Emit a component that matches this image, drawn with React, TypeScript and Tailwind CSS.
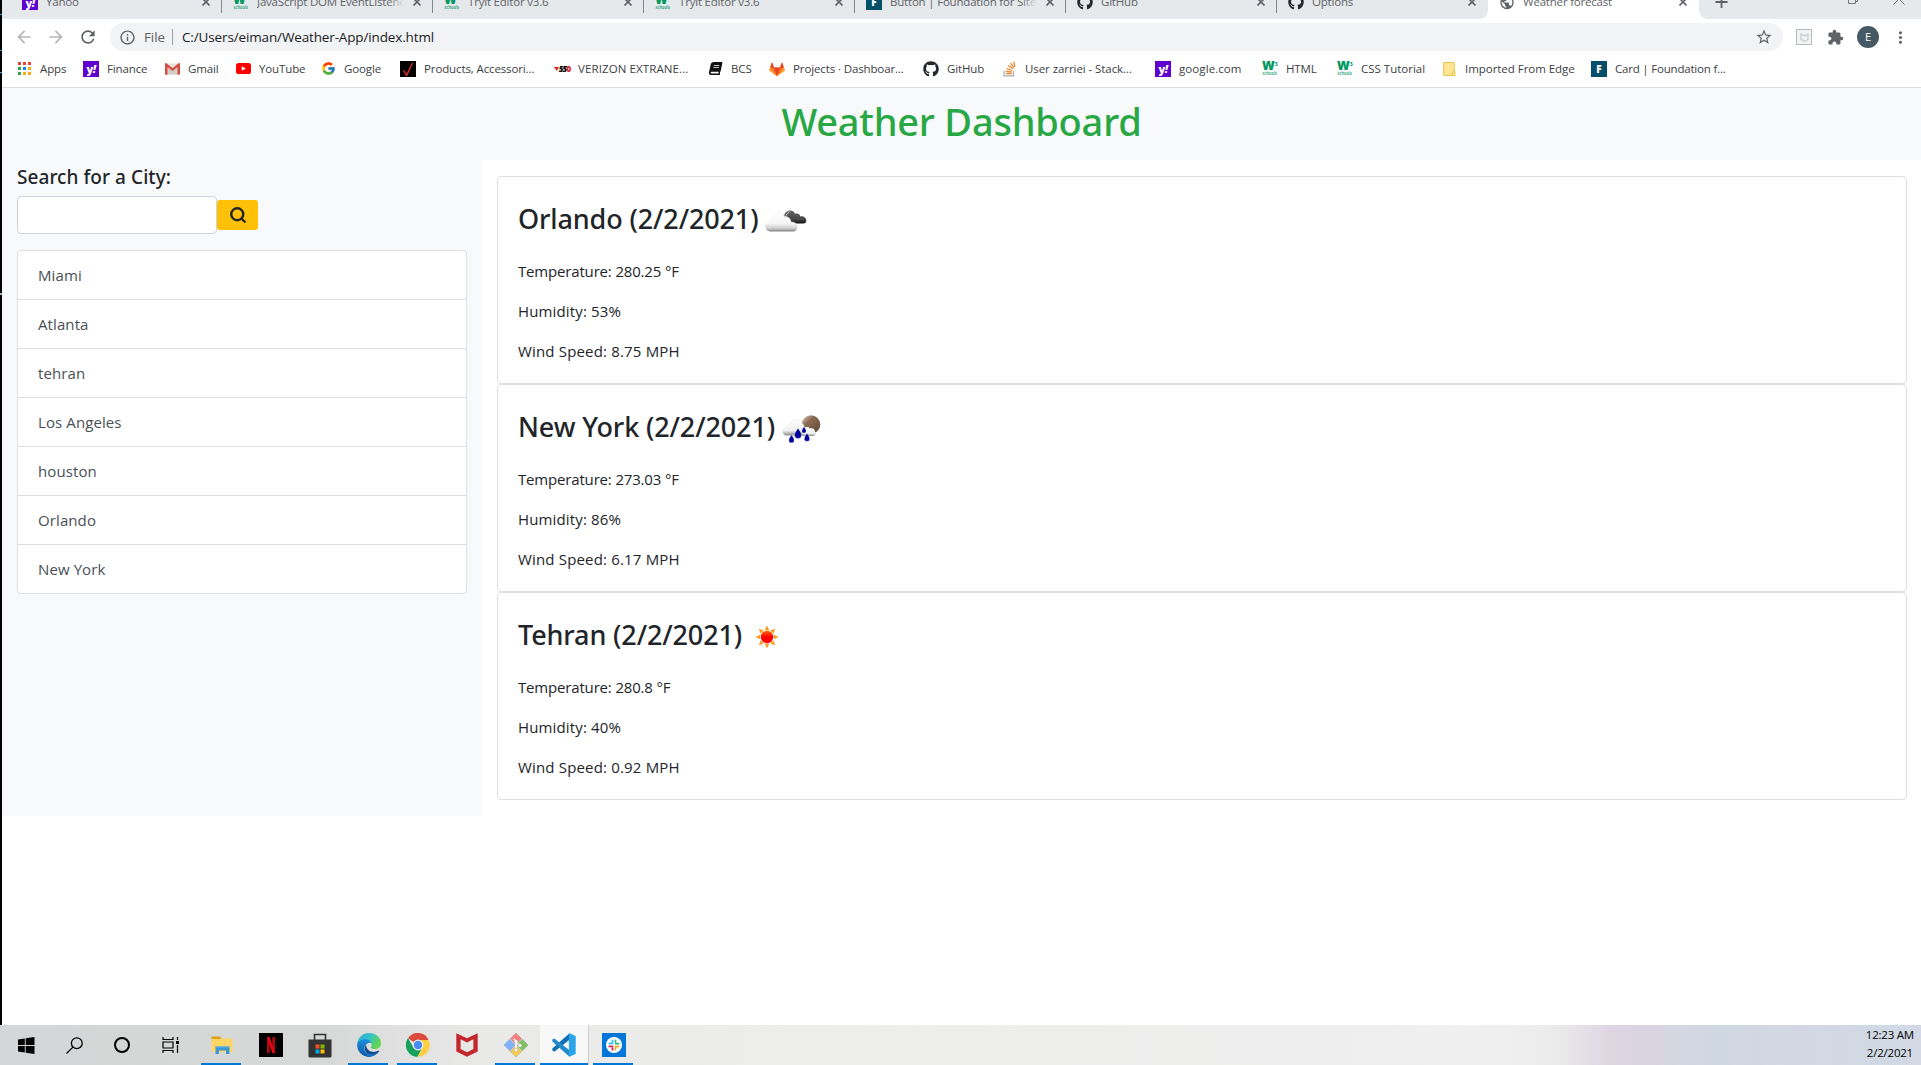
import type { ReactNode } from "react";
import { MdArrowBack, MdArrowForward, MdExtension, MdInfoOutline, MdMoreVert, MdPublic, MdRefresh, MdStarBorder } from "react-icons/md";
import { FaBook, FaGithub } from "react-icons/fa";
import { FcGoogle } from "react-icons/fc";
import { Search } from "lucide-react";

/* ---------- favicons ---------- */

const Yahoo = () => (
  <div className="flex h-4 w-4 items-center justify-center bg-[#5f01d1]">
    <span className="font-['Open_Sans',sans-serif] text-[11px] leading-none font-extrabold tracking-[-0.5px] text-white">
      y<i>!</i>
    </span>
  </div>
);

const Foundation = () => (
  <div className="flex h-4 w-4 items-center justify-center bg-[#074e68] font-['Open_Sans',sans-serif] text-[10px] leading-none font-extrabold text-white">
    F
  </div>
);

const W3 = () => (
  <svg width="17" height="17" viewBox="0 0 17 17" fill="#059862">
    <text x="0" y="10.5" fontFamily="Open Sans, sans-serif" fontSize="17" fontWeight="800" textLength="13.5" lengthAdjust="spacingAndGlyphs">w</text>
    <text x="13.2" y="5.5" fontFamily="Open Sans, sans-serif" fontSize="6" fontWeight="700">3</text>
    <text x="0.5" y="15.6" fontFamily="Open Sans, sans-serif" fontSize="5" fontWeight="700" textLength="15.5" lengthAdjust="spacingAndGlyphs" opacity="0.75">schools</text>
  </svg>
);

const AppsGrid = () => (
  <div className="grid grid-cols-3 gap-[2px]">
    {["bg-[#ea4335]", "bg-[#ea4335]", "bg-[#ea4335]", "bg-[#34a05a]", "bg-[#1a84f0]", "bg-[#f9ab10]", "bg-[#34a05a]", "bg-[#f9ab10]", "bg-[#f9ab10]"].map((c, i) => (
      <span key={i} className={`h-[3px] w-[3px] ${c}`} />
    ))}
  </div>
);

const Gmail = () => (
  <svg width="15" height="12" viewBox="0 0 15 12">
    <path d="M1 .5h13v11H1z" fill="#e6e2e0" />
    <path d="M2.5 11.5V4l5 3.8 5-3.8v7.5z" fill="#d3cdca" />
    <path d="M0 1.2C0 .5.6 0 1.2 0L7.5 5.2 13.8 0c.7 0 1.2.5 1.2 1.2V11c0 .5-.4.8-.8.8h-1.7V4L7.5 8 2.5 4v7.8H.8C.4 11.8 0 11.500 0 11z" fill="#d54b3d" />
  </svg>
);

const YouTube = () => (
  <svg width="15" height="11" viewBox="0 0 15 11">
    <rect width="15" height="11" rx="2.600" fill="#f00" />
    <path d="M5.800 3.200v4.600L9.800 5.500z" fill="#fff" />
  </svg>
);

const Verizon = () => (
  <svg width="16" height="16" viewBox="0 0 16 16">
    <rect width="16" height="16" fill="#000" />
    <path d="M3 9.200h1.600l1.900 3.600L12 1.800h1.300L7.200 15H6z" fill="#e02a2a" />
  </svg>
);

const VerizonSso = () => (
  <div className="flex items-center font-['Open_Sans',sans-serif] text-[8px] leading-none font-extrabold tracking-[-0.8px]">
    <svg width="5" height="4" viewBox="0 0 5 4"><path d="M0 0h5L2.800 4z" fill="#e02020" /></svg>
    <i>55</i>
    <span className="text-[#e02020]">0</span>
  </div>
);

const Gitlab = ({ size = 16 }: { size?: number }) => (
  <svg width={size} height={size} viewBox="0 0 16 16">
    <path d="M8 15.200 2 10.700.2 9.300 3 1.200 5 6.500h6l2-5.300 2.800 8.100-1.800 1.400z" fill="#fc6d26" />
    <path d="M8 15.200 5 6.500h6z" fill="#e24329" />
    <path d="M3 1.200 5 6.500H1.200zM13 1.200 11 6.500h3.800z" fill="#e24329" />
    <path d="M.2 9.300 1.200 6.500 8 15.200zM15.800 9.300l-1-2.800L8 15.200z" fill="#fca326" />
  </svg>
);

const StackOverflow = () => (
  <svg width="13" height="16" viewBox="0 0 13 16" fill="none" strokeWidth="1.200">
    <path d="M1 9.800v5h9.500v-5" stroke="#a9adb1" />
    <path d="M2.800 12.600h6M2.900 10.400l6 .7M3.600 7.600l5.600 1.900M5.200 4.600l4.900 3.200M7.500 2.200l3.600 4.600M10.700.6l1.100 5.200" stroke="#f48024" />
  </svg>
);

const Folder = () => (
  <svg width="13" height="16" viewBox="0 0 13 16">
    <path d="M.7 1.500h10.600v13H.7z" fill="#ffe694" stroke="#ebc54f" />
    <path d="M9.400 14.500V11l2.600-.5v4z" fill="#ffe694" stroke="#ebc54f" />
  </svg>
);

/* ---------- browser chrome ---------- */

const X = () => (
  <svg width="8" height="8" viewBox="0 0 8 8" stroke="#5f6368" strokeWidth="1.600">
    <path d="M.5.500 7.500 7.500M7.500.500.500 7.500" />
  </svg>
);

const tabs: { icon: ReactNode; title: string; active?: boolean; sep?: boolean; fade?: boolean }[] = [
  { icon: <Yahoo />, title: "Yahoo", sep: true },
  { icon: <W3 />, title: "JavaScript DOM EventListener", sep: true, fade: true },
  { icon: <W3 />, title: "Tryit Editor v3.6", sep: true },
  { icon: <W3 />, title: "Tryit Editor v3.6", sep: true },
  { icon: <Foundation />, title: "Button | Foundation for Sites", sep: true, fade: true },
  { icon: <FaGithub size={16} color="#24292e" />, title: "GitHub", sep: true },
  { icon: <FaGithub size={16} color="#24292e" />, title: "Options" },
  { icon: <MdPublic size={17} color="#5f6368" />, title: "Weather forecast", active: true },
];

const TabStrip = () => (
  <div className="flex h-[19px] overflow-hidden bg-[#e6e9ec] pl-[9px]">
    {tabs.map((t, i) => (
      <div key={i} className={`relative h-[19px] w-[211px] shrink-0 ${t.active ? "bg-white" : ""}`}>
        <div className="-mt-[13px] flex h-[30px] items-center pl-[11px]">
          <span className="flex w-4 shrink-0 justify-center">{t.icon}</span>
          <span className="relative ml-[8px] w-[147px] overflow-hidden text-[11.5px] tracking-[-0.2px] whitespace-nowrap text-[#5f6368]">
            {t.title}
            {t.fade && <span className="absolute top-0 right-0 h-full w-4 bg-linear-to-r from-transparent to-[#e6e9ec]" />}
          </span>
          <span className="ml-[9px]"><X /></span>
        </div>
        {t.sep && <span className="absolute top-0 right-0 h-[13px] w-px bg-[#80868b]" />}
        {t.active && (
          <>
            <span className="absolute bottom-0 -left-2 h-2 w-2 bg-[radial-gradient(circle_at_0_0,#e6e9ec_7.500px,#fff_8px)]" />
            <span className="absolute -right-2 bottom-0 h-2 w-2 bg-[radial-gradient(circle_at_100%_0,#e6e9ec_7.500px,#fff_8px)]" />
          </>
        )}
      </div>
    ))}
    <svg className="ml-[16px] shrink-0" width="13" height="9" viewBox="0 0 13 9" stroke="#5f6368" strokeWidth="1.800">
      <path d="M.5 2h12M6.500 0v8" />
    </svg>
    <svg className="ml-auto shrink-0" width="10" height="5" viewBox="0 0 10 5" fill="none" stroke="#74787c">
      <path d="M.5 0v3.500h7V0M7.500 1.500h2V0" />
    </svg>
    <svg className="mr-[16px] ml-[35px] shrink-0" width="12" height="5" viewBox="0 0 12 5" stroke="#74787c">
      <path d="M.5 4.500 6 -1 11.500 4.500" fill="none" />
    </svg>
  </div>
);

const Toolbar = () => (
  <div className="flex h-[36px] items-center bg-white text-[#5f6368]">
    <MdArrowBack size={20} className="ml-[12px] text-[#b4b6b9]" />
    <MdArrowForward size={20} className="ml-[12px] text-[#b4b6b9]" />
    <MdRefresh size={20} className="ml-[12px]" />
    <div className="ml-[12px] flex h-7 w-[1673px] shrink-0 items-center rounded-full bg-[#f1f3f4] text-[13.5px]">
      <MdInfoOutline size={17} className="ml-[9px]" />
      <span className="ml-[8px] w-[21px] tracking-[-0.1px]">File</span>
      <span className="ml-[7px] h-4 w-px bg-[#9aa0a6]" />
      <span className="ml-[9px] tracking-[-0.14px] text-[#202124]">C:/Users/eiman/Weather-App/index.html</span>
      <MdStarBorder size={18} className="mr-[10px] ml-auto" />
    </div>
    <span className="ml-[13px] flex h-4 w-4 items-center justify-center border border-[#b4babd] bg-[#f1f4f4]">
      <svg width="9" height="9" viewBox="0 0 9 9" fill="none" stroke="#d0d3d5" strokeWidth="1.500"><path d="M1 1v5.500l3.500 1.800L8 6.500V1L4.500 3z" /></svg>
    </span>
    <MdExtension size={17} className="ml-[15px]" />
    <span className="ml-[13px] flex h-[22px] w-[22px] items-center justify-center rounded-full bg-[#455a64] text-[11px] text-white">E</span>
    <MdMoreVert size={19} className="ml-[12px]" />
  </div>
);

const bookmarks: { icon: ReactNode; label: string; w: string; track?: string }[] = [
  { icon: <AppsGrid />, label: "Apps", w: "w-[67px]" },
  { icon: <Yahoo />, label: "Finance", w: "w-[81px]" },
  { icon: <Gmail />, label: "Gmail", w: "w-[71px]" },
  { icon: <YouTube />, label: "YouTube", w: "w-[85px]" },
  { icon: <FcGoogle size={15} />, label: "Google", w: "w-[80px]" },
  { icon: <Verizon />, label: "Products, Accessori...", w: "w-[154px]" },
  { icon: <VerizonSso />, label: "VERIZON EXTRANE...", w: "w-[153px]", track: "tracking-[0.1px]" },
  { icon: <FaBook size={13} color="#111" className="-skew-x-12" />, label: "BCS", w: "w-[62px]" },
  { icon: <Gitlab />, label: "Projects · Dashboar...", w: "w-[154px]" },
  { icon: <FaGithub size={16} color="#24292e" />, label: "GitHub", w: "w-[78px]" },
  { icon: <StackOverflow />, label: "User zarriei - Stack...", w: "w-[154px]", track: "tracking-[-0.07px]" },
  { icon: <Yahoo />, label: "google.com", w: "w-[107px]", track: "tracking-[0.08px]" },
  { icon: <W3 />, label: "HTML", w: "w-[75px]" },
  { icon: <W3 />, label: "CSS Tutorial", w: "w-[104px]", track: "tracking-[0px]" },
  { icon: <Folder />, label: "Imported From Edge", w: "w-[150px]", track: "tracking-[-0.04px]" },
  { icon: <Foundation />, label: "Card | Foundation f...", w: "w-[154px]", track: "tracking-[-0.2px]" },
];

const BookmarkBar = () => (
  <div className="flex h-[33px] items-center border-b border-[#d9dce0] bg-white pb-[5px] pl-[14px]">
    {bookmarks.map((b) => (
      <div key={b.label} className={`flex shrink-0 items-center gap-2 ${b.w}`}>
        <span className="flex w-4 shrink-0 items-center justify-center">{b.icon}</span>
        <span className={`text-[11.5px] whitespace-nowrap text-[#3c4043] ${b.track ?? "tracking-[-0.12px]"}`}>{b.label}</span>
      </div>
    ))}
  </div>
);

/* ---------- weather icons ---------- */

const BrokenClouds = () => (
  <svg width="42" height="24" viewBox="0 0 42 24">
    <defs>
      <linearGradient id="cl" x1="0" y1="0" x2="0" y2="1">
        <stop offset="0" stopColor="#fff" />
        <stop offset=".55" stopColor="#f6f6f6" />
        <stop offset=".82" stopColor="#cfcfcf" />
        <stop offset=".93" stopColor="#a5a5a5" />
        <stop offset="1" stopColor="#555" />
      </linearGradient>
      <linearGradient id="dk" x1="0" y1="0" x2="0" y2="1">
        <stop offset="0" stopColor="#666" />
        <stop offset=".7" stopColor="#444" />
        <stop offset="1" stopColor="#111" />
      </linearGradient>
    </defs>
    <path d="M19 8c0-4 2.500-6.500 6-6.500 3 0 4.600 1.800 5.200 3.300 2.500-1 4.600.4 5.100 2.600 3-.6 6 1.200 6 4 0 2.400-1.800 3.200-4 3.200H27z" fill="url(#dk)" />
    <path d="M18.500 8c.8-4.400 3.200-6.500 6-6M20.500 8.500c.5-3 2-4.800 3.800-5.200" fill="none" stroke="#c8c8c8" strokeWidth="1" />
    <path d="M5.500 22.500C2.500 22.500.5 20.500.5 17.800c0-2.700 2-4.500 4.300-4.700C5 10 6.500 9.200 8 9c.8-2.800 3.200-4.700 6-4.700 2.600 0 4.400 1.300 5.400 3.300 3.600-.4 6.400 2 6.600 5.400 3.600-.3 6.500 1.900 6.500 5 0 2.700-2 4.500-4.500 4.500z" fill="url(#cl)" stroke="#e6e6e6" strokeWidth=".4" />
  </svg>
);

const Drop = ({ x, y, s }: { x: number; y: number; s: number }) => (
  <path transform={`translate(${x} ${y}) scale(${s})`} d="M0-4.500C.8-2.800 2.800-.8 2.800 1.200a2.800 2.800 0 0 1-5.600 0C-2.800-.8-.8-2.800 0-4.500z" fill="#00009c" stroke="#fff" strokeWidth=".3" />
);

const RainMoon = () => (
  <svg width="39" height="29" viewBox="0 0 39 29">
    <defs>
      <linearGradient id="mn" x1="0" y1="0" x2="1" y2="1">
        <stop offset="0" stopColor="#e8d5c6" />
        <stop offset=".35" stopColor="#8d6b55" />
        <stop offset="1" stopColor="#5b4538" />
      </linearGradient>
      <linearGradient id="cr" x1="0" y1="0" x2="0" y2="1">
        <stop offset="0" stopColor="#fff" />
        <stop offset=".7" stopColor="#f0f0f0" />
        <stop offset="1" stopColor="#8a8a8a" />
      </linearGradient>
    </defs>
    <circle cx="29" cy="9.500" r="9.300" fill="url(#mn)" />
    <path d="M16 21c-1-3 1-6 5-6.500.8-2.500 4.600-3.500 6.800-1 2.800-.6 5 .8 5 3 1.400.8 1 4.500-2 4.500z" fill="url(#cr)" />
    <path d="M4.500 20.500C2 20.500.5 18.800.5 16.500s1.600-4 3.700-4.200c.2-2 1.600-3.300 3.400-3.300C8.500 6 10.700 4 13.500 4c3 0 5 1.700 6 4 2 1 3 3 3 5.500 0 4-2 7-5.500 7z" fill="url(#cr)" stroke="#ddd" strokeWidth=".3" />
    <Drop x={9.500} y={24} s={0.950} />
    <Drop x={16} y={18.500} s={1.250} />
    <Drop x={25} y={22.500} s={0.950} />
    <Drop x={22} y={15} s={0.750} />
  </svg>
);

const Sun = () => (
  <svg width="24" height="24" viewBox="-12 -12 24 24">
    <defs>
      <linearGradient id="sn" x1="0" y1="0" x2="0" y2="1">
        <stop offset="0" stopColor="#ff6a00" />
        <stop offset=".5" stopColor="#ff0000" />
      </linearGradient>
    </defs>
    {[0, 45, 90, 135, 180, 225, 270, 315].map((a) => (
      <path key={a} transform={`rotate(${a})`} d="M-2.300-6.800 0-11.500 2.300-6.800z" fill="#ff9a1a" />
    ))}
    <circle r="6.200" fill="url(#sn)" />
  </svg>
);

/* ---------- dashboard ---------- */

const cities = ["Miami", "Atlanta", "tehran", "Los Angeles", "houston", "Orlando", "New York"];

const reports = [
  { city: "Orlando (2/2/2021)", icon: <BrokenClouds />, w: "w-[247px]", iconPad: "pt-[2px]", t: "280.25", h: 53, wind: "8.75" },
  { city: "New York (2/2/2021)", icon: <RainMoon />, w: "w-[264px]", iconPad: "pt-[4px]", t: "273.03", h: 86, wind: "6.17" },
  { city: "Tehran (2/2/2021)", icon: <Sun />, w: "w-[237px]", iconPad: "pt-[3px]", t: "280.8", h: 40, wind: "0.92" },
];

const Dashboard = () => (
  <main className="flex-1 bg-white text-[#212529]">
    <header className="h-[72px] bg-[#f8f9fb] pt-[9px] text-center font-['Noto_Sans',sans-serif] text-[38px] leading-[48px] font-medium tracking-[-0.22px] text-[#28a745]">
      Weather Dashboard
    </header>
    <div className="flex h-[656px]">
      <aside className="w-[480px] shrink-0 bg-[#f8f9fb] px-[15px] pt-[5px]">
        <h5 className="mb-[7px] font-['Noto_Sans',sans-serif] text-[19px] leading-6 font-medium tracking-[0.06px]">Search for a City:</h5>
        <form className="flex items-center">
          <input className="h-[38px] w-[200px] rounded border border-[#ced4da] bg-white px-3 outline-none" />
          <button type="button" className="flex h-[30px] w-[41px] items-center justify-center rounded-[3px] bg-[#ffc107]">
            <Search size={18} strokeWidth={3.2} />
          </button>
        </form>
        <ul className="mt-4 overflow-hidden rounded border border-[#dfdfdf] bg-white text-[15px] tracking-[0.1px] text-[#495057]">
          {cities.map((c) => (
            <li key={c} className="flex h-[49px] items-center border-b border-[#dfdfdf] px-5 last:h-[48px] last:border-b-0">{c}</li>
          ))}
        </ul>
      </aside>
      <section className="flex-1 pt-4 pr-[14px] pl-[15px]">
        {reports.map((r) => (
          <article key={r.city} className="h-[208px] rounded border border-[#dfdfdf] px-[20px] pt-[21px]">
            <h3 className="mb-[18px] flex h-[43px] items-center font-['Noto_Sans',sans-serif] text-[27px] font-medium tracking-[-0.13px]">
              <span className={`shrink-0 whitespace-nowrap ${r.w}`}>{r.city}</span>
              <span className={r.iconPad}>{r.icon}</span>
            </h3>
            <div className="flex flex-col gap-4 text-[15px] leading-6">
              <p className="tracking-[-0.17px]">Temperature: {r.t} °F</p>
              <p className="tracking-[0.15px]">Humidity: {r.h}%</p>
              <p className="tracking-[0.17px]">Wind Speed: {r.wind} MPH</p>
            </div>
          </article>
        ))}
      </section>
    </div>
  </main>
);

/* ---------- taskbar ---------- */

const Windows = () => (
  <svg width="17" height="17" viewBox="0 0 17 17">
    <path d="M0 2.400 6.800 1.500v6.500H0zM7.700 1.300 16.500 0v8H7.700zM0 9h6.800v6.400L0 14.500zM7.700 9h8.800v8l-8.800-1.300z" fill="#000" />
  </svg>
);
const Magnifier = () => (
  <svg width="17" height="17" viewBox="0 0 17 17" fill="none" stroke="#000" strokeWidth="1.300">
    <circle cx="10.800" cy="6.200" r="5.400" />
    <path d="M6.900 10.100.5 16.500" />
  </svg>
);
const TaskView = () => (
  <svg width="17" height="16" viewBox="0 0 17 16" fill="none" stroke="#000" strokeWidth="1.200">
    <path d="M1 0v2.500h10V0M1 16v-2.500h10V16M1 5h10v6H1zM15.500 0v3M15.500 8v8" />
    <path d="M14 4h3v3h-3z" fill="#000" stroke="none" />
  </svg>
);
const Explorer = () => (
  <svg width="22" height="20" viewBox="0 0 22 20">
    <path d="M.5 2h9l1.500 1.500h10.500V17H.5z" fill="#ffd566" />
    <path d="M.5 1.500h8.800L10 4H.5z" fill="#dba017" />
    <path d="M4.500 19v-7.500h14V19h-3.500v-3.500H8V19z" fill="#3b97d6" />
    <path d="M4.500 11.500h14v1h-14z" fill="#62b3e8" />
  </svg>
);
const Netflix = () => (
  <svg width="24" height="24" viewBox="0 0 24 24">
    <rect width="24" height="24" fill="#000" />
    <path d="M8 4h2.700v16L8 20.300zM13.300 4H16v16.300l-2.700-.3z" fill="#b1060f" />
    <path d="M8 4h2.700L16 20.300l-2.700-.3z" fill="#e50914" />
  </svg>
);
const Store = () => (
  <svg width="24" height="25" viewBox="0 0 24 25">
    <path d="M6.500 7V1.500h11V7" fill="none" stroke="#333" strokeWidth="1.600" />
    <path d="M.5 6.500h23V23a1.500 1.500 0 0 1-1.500 1.500H2A1.500 1.500 0 0 1 .5 23z" fill="#333" />
    <path d="M7.500 11.500h4v4h-4z" fill="#f25022" /><path d="M12.500 11.500h4v4h-4z" fill="#7fba00" />
    <path d="M7.500 16.500h4v4h-4z" fill="#00a4ef" /><path d="M12.500 16.500h4v4h-4z" fill="#ffb900" />
  </svg>
);
const Edge = () => (
  <svg width="24" height="24" viewBox="0 0 24 24">
    <defs>
      <linearGradient id="e1" x1="0" y1="0" x2="1" y2=".4">
        <stop offset="0" stopColor="#2aa5dc" /><stop offset=".55" stopColor="#34c3c6" /><stop offset="1" stopColor="#62d64e" />
      </linearGradient>
      <linearGradient id="e2" x1="0" y1="0" x2="0" y2="1">
        <stop offset="0" stopColor="#1b8fdc" /><stop offset="1" stopColor="#0f57a8" />
      </linearGradient>
    </defs>
    <path d="M.2 11C.8 4.700 5.800 0 12 0c7 0 12 4.800 12 10.200 0 3.500-2.800 5.900-6.200 5.900-2.700 0-4.100-1-4.100-1.800 0-.6.900-1 .9-2.600 0-2-2-4.200-5.600-4.200C4.500 7.500 1.200 9 .2 11z" fill="url(#e1)" />
    <path d="M.1 12C.2 8.800 3.800 6.200 8.300 6.200c3.300 0 5.600 1.500 6.200 3.800C11 9 7.500 11.800 7.500 15.500c0 4 3.200 7.500 7.200 8.100A12 12 0 0 1 .1 12z" fill="url(#e2)" />
    <path d="M9 11.700c-2.800 3.700-.4 9.800 5.200 10.300 3 .3 6-1 7.800-3.500.5-.7 0-1.100-.7-.7-5 2.500-11.600.8-12.300-6.100z" fill="#114a8b" />
    <path d="M12 24c4 0 7.700-2 9.900-5.400-4.600 3.600-10.900 3.600-13.700-1.200.2 3 2 5.700 3.800 6.600z" fill="#1471c4" />
  </svg>
);
const Chrome = () => (
  <svg width="24" height="24" viewBox="0 0 24 24">
    <path d="M12 12 2 5.300A11.700 11.700 0 0 1 22.600 7H12z" fill="#db4a3c" />
    <path d="M12 12 7.500 14.500 2 5.300a11.700 11.700 0 0 0 9.600 18.400L16.400 14.600z" fill="#16a05e" />
    <path d="M22.600 7H12l4.400 7.500-4.800 9.200A11.700 11.700 0 0 0 22.600 7z" fill="#fecf45" />
    <circle cx="12" cy="12" r="5.400" fill="#f1f1f1" />
    <circle cx="12" cy="12" r="4.200" fill="#4a8af4" />
  </svg>
);
const McAfee = () => (
  <svg width="22" height="24" viewBox="0 0 22 24">
    <path d="M.3.200 11 5.300 21.700.200v18.300L11 23.800.3 18.500zM4.600 6.300v9.700l6.400 3.200 6.400-3.200V6.300L11 9.500z" fill="#c3282d" fillRule="evenodd" />
  </svg>
);
const Git = () => (
  <svg width="26" height="26" viewBox="0 0 26 26">
    <g stroke="#8a8a8a" strokeWidth=".4">
      <path d="M13 1l5.700 5.700-5.700 5.700-5.700-5.700z" fill="#fb8080" />
      <path d="M19.300 7.300 25 13l-5.700 5.700-5.700-5.700z" fill="#7fc45a" />
      <path d="M6.700 7.300 12.400 13l-5.700 5.700L1 13z" fill="#80b0ff" />
      <path d="M13 13.600l5.700 5.700L13 25l-5.700-5.700z" fill="#f9ce4e" />
    </g>
    <path d="M11 7l2 3v8M13 10l4 3.500" stroke="#fff" strokeWidth="1.600" fill="none" />
    <g fill="#fff" stroke="#8a8a8a" strokeWidth=".4"><circle cx="13" cy="9.500" r="1.800" /><circle cx="17" cy="13.500" r="1.800" /><circle cx="13" cy="18" r="1.800" /></g>
  </svg>
);
const VsCode = () => (
  <svg width="24" height="24" viewBox="0 0 24 24">
    <path d="M17.500.200.3 15.500v2l2 1.200L18.500 6z" fill="#1070b3" />
    <path d="M17.500 23.800.3 8.600v-2l2-1.200L18.500 18z" fill="#2289ca" />
    <path d="M17.500.200 23.700 3v18l-6.200 2.800c-.4.100-.6-.2-.6-.600V.8c0-.4.200-.7.600-.6z" fill="#2ba4ea" />
  </svg>
);
const Slack = () => (
  <svg width="24" height="24" viewBox="0 0 24 24">
    <rect width="24" height="24" fill="#0277d7" />
    <circle cx="12" cy="12" r="8" fill="#fff" />
    <g strokeWidth="1.800" strokeLinecap="round">
      <path d="M10.500 7.300v3.200M7.300 10.500h1.700" stroke="#36c5f0" />
      <path d="M13.500 7.300v1.500M13.500 10.600h3.200" stroke="#2eb67d" />
      <path d="M13.500 13.500v3.200M15 13.500h1.700" stroke="#ecb22e" />
      <path d="M10.500 15.200v1.500M7.300 13.400h3.200" stroke="#e01e5a" />
    </g>
  </svg>
);

const apps: { icon: ReactNode; open?: boolean; active?: boolean }[] = [
  { icon: <Explorer />, open: true },
  { icon: <Netflix /> },
  { icon: <Store /> },
  { icon: <Edge />, open: true },
  { icon: <Chrome />, open: true },
  { icon: <McAfee /> },
  { icon: <Git />, open: true },
  { icon: <VsCode />, active: true },
  { icon: <Slack />, open: true },
];

const Taskbar = () => (
  <footer className="flex h-10 bg-[linear-gradient(90deg,#d3d6d6_0px,#d7d9d8_330px,#e9e9e8_480px,#ededec_800px,#efefef_1510px,#ebebeb_1555px,#ddd6e2_1610px,#dad4e0_1640px,#cfd8e1_1720px,#d4d7e3_1800px,#d0d9e3_1870px,#d2d9e5_1921px)]">
    <div className="flex pl-[2px]">
      {[<Windows />, <Magnifier />, <span className="h-4 w-4 rounded-full border-[2.500px] border-black" />, <TaskView />].map((n, i) => (
        <span key={i} className="flex w-12 items-center justify-center">{n}</span>
      ))}
    </div>
    <div className="ml-[3px] flex">
      {apps.map((a, i) => (
        <div key={i} className={`relative flex w-[49px] items-center justify-center ${a.active ? "border-r border-[#d0d0d0] bg-[#f8f8f8]" : ""}`}>
          {a.icon}
          {a.open && <span className="absolute bottom-0 left-[4px] h-[2px] w-10 bg-[#0078d7]" />}
          {a.active && <span className="absolute bottom-0 left-0 h-[2px] w-full bg-[#0078d7]" />}
        </div>
      ))}
    </div>
    <div className="mr-[7px] ml-auto pt-[1px] text-center text-[11.500px] leading-[18px] tracking-[-0.22px] text-black">
      <div>12:23 AM</div>
      <div>2/2/2021</div>
    </div>
  </footer>
);

export default function App() {
  return (
    <div className="flex h-[1065px] w-[1921px] flex-col overflow-hidden bg-white font-['Open_Sans',sans-serif]">
      <div className="flex h-[1025px]">
        <div className="w-[2px] shrink-0 bg-[linear-gradient(#000_14px,#4fa8c8_14px_15px,#000_15px_50px,#4fa8c8_50px_51px,#000_51px_72px,#4fa8c8_72px_73px,#000_73px_293px,#b0b0b0_293px_295px,#000_295px)]" />
        <div className="flex min-w-0 flex-1 flex-col">
          <TabStrip />
          <Toolbar />
          <BookmarkBar />
          <Dashboard />
        </div>
      </div>
      <Taskbar />
    </div>
  );
}
